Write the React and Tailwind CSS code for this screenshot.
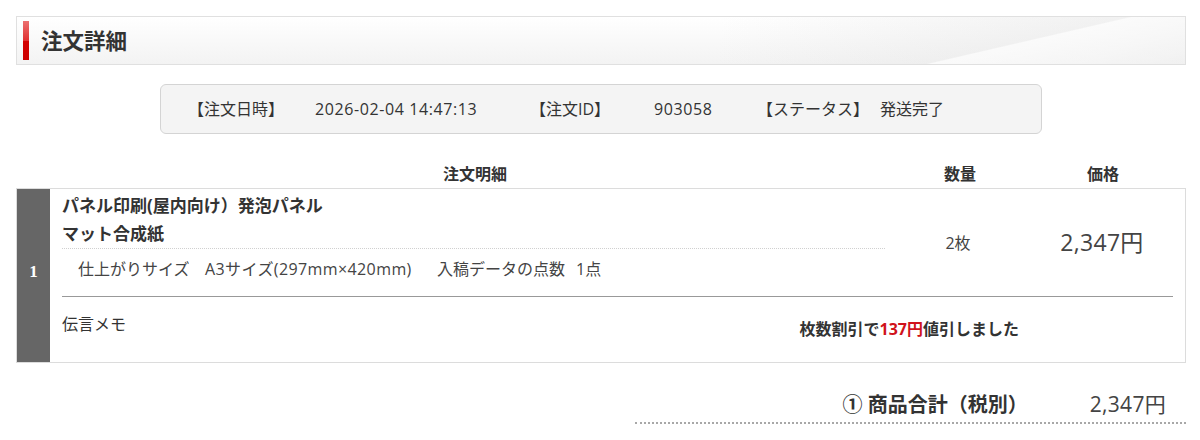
export default function App() {
  const font = { fontFamily: '"Open Sans","Noto Sans CJK JP",sans-serif' };
  return (
    <div className="w-[1200px] h-[440px] bg-white text-[#333] overflow-hidden" style={font}>
      <div className="ml-[16px] w-[1170px] pt-[16px]">
        {/* Title bar */}
        <div className="h-[49px] border border-[#e0e0e0] flex items-center pl-[6px] bg-[linear-gradient(167deg,transparent_0%,transparent_81%,rgba(255,255,255,0.7)_81.4%,rgba(255,255,255,0.35)_100%),linear-gradient(95deg,rgba(255,255,255,0)_60%,rgba(220,220,220,0.45)_100%),linear-gradient(180deg,#ffffff_0%,#f3f3f3_100%)]">
          <div className="w-[6px] h-[39px] bg-[linear-gradient(180deg,#ec7070_0%,#e03030_50%,#d40000_51%,#cc0000_100%)]" />
          <h1 className="ml-[12px] text-[21.5px] font-bold text-[#333] leading-none">注文詳細</h1>
        </div>

        {/* Info box */}
        <div className="mt-[19px] ml-[144px] w-[882px] h-[50px] rounded-[6px] border border-[#d4d4d4] bg-[#f4f4f4] flex items-center pl-[27px] text-[16px] text-[#333]">
          <span className="w-[127px]">【注文日時】</span>
          <span className="w-[215px] tracking-[0.6px]">2026-02-04 14:47:13</span>
          <span className="w-[124px]">【注文ID】</span>
          <span className="w-[103px] tracking-[0.6px]">903058</span>
          <span className="w-[123px]">【ステータス】</span>
          <span>発送完了</span>
        </div>

        {/* Table header */}
        <div className="mt-[26px] h-[28px] flex items-center text-[16px] font-bold text-[#333]">
          <div className="w-[34px]" />
          <div className="w-[850px] text-center">注文明細</div>
          <div className="w-[120px] text-center">数量</div>
          <div className="flex-1 text-center">価格</div>
        </div>

        {/* Table body */}
        <div className="h-[175px] border border-[#dcdcdc] flex">
          <div className="w-[33px] bg-[#666666] flex items-center justify-center pb-[8px] text-white text-[17px] font-bold" style={{ fontFamily: '"Liberation Serif","DejaVu Serif",serif' }}>
            1
          </div>
          <div className="flex-1 flex flex-col pl-[12px] pr-[12px]">
            <div className="flex h-[107px]">
              <div className="w-[823px] flex flex-col">
                <div className="pt-[3px] text-[17px] font-bold text-[#333] leading-[28px]">パネル印刷(屋内向け）発泡パネル</div>
                <div className="text-[17px] font-bold text-[#333] leading-[28px]">マット合成紙</div>
                <div className="border-t border-dotted border-[#d0d0d0]" />
                <div className="pl-[16px] pt-[10px] text-[16px] text-[#444] leading-[20px] flex whitespace-nowrap">
                  <span className="w-[127px]">仕上がりサイズ</span>
                  <span className="w-[232px] tracking-[0.4px]">A3サイズ(297mm×420mm)</span>
                  <span className="w-[139px]">入稿データの点数</span>
                  <span>1点</span>
                </div>
              </div>
              <div className="w-[146px] flex items-center justify-center text-[16px] text-[#444]">2枚</div>
              <div className="flex-1 flex items-center justify-center text-[23px] text-[#444] tracking-[0.3px]">2,347円</div>
            </div>
            <div className="border-t border-[#999]" />
            <div className="flex flex-1 items-start">
              <div className="pt-[17px] text-[16px] text-[#333] leading-[20px]">伝言メモ</div>
              <div className="ml-auto mr-[154px] pt-[22px] text-[16px] font-bold text-[#333] leading-[20px]">
                枚数割引で<span className="text-[#d0121b]">137円</span>値引しました
              </div>
            </div>
          </div>
        </div>

        {/* Total */}
        <div className="mt-[26px] ml-auto w-[551px] border-b-2 border-dotted border-[#a8a8a8] flex items-center justify-end h-[35px] pb-[2px]">
          <span className="text-[20px] font-bold text-[#333]">① 商品合計（税別）</span>
          <span className="ml-[62px] mr-[20px] text-[21px] text-[#444] tracking-[0.3px]">2,347円</span>
        </div>
      </div>
    </div>
  );
}
